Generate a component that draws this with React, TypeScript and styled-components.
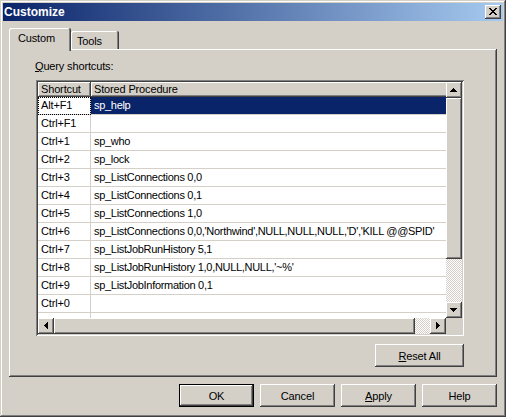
import React from "react";
import styled, { createGlobalStyle } from "styled-components";

const FACE = "#d4d0c8";
const SHADOW = "#808080";
const DARK = "#404040";
const LIGHT = "#ffffff";
const NAVY = "#0a246a";

const raisedEdge = `
  box-shadow: inset -1px -1px ${DARK}, inset 1px 1px ${LIGHT},
    inset -2px -2px ${SHADOW}, inset 2px 2px ${FACE};
`;

const checker = `
  background: repeating-conic-gradient(${FACE} 0% 25%, ${LIGHT} 0% 50%) 0 0 / 2px 2px;
`;

const GlobalStyle = createGlobalStyle`
  html, body {
    margin: 0;
    padding: 0;
    background: ${FACE};
    overflow: hidden;
  }
  body {
    font-family: "Liberation Sans", Arial, sans-serif;
    font-size: 11px;
    letter-spacing: -0.15px;
    color: #000;
  }
`;

const shortcuts: [string, string][] = [
  ["Alt+F1", "sp_help"],
  ["Ctrl+F1", ""],
  ["Ctrl+1", "sp_who"],
  ["Ctrl+2", "sp_lock"],
  ["Ctrl+3", "sp_ListConnections 0,0"],
  ["Ctrl+4", "sp_ListConnections 0,1"],
  ["Ctrl+5", "sp_ListConnections 1,0"],
  ["Ctrl+6", "sp_ListConnections 0,0,'Northwind',NULL,NULL,NULL,'D','KILL @@SPID'"],
  ["Ctrl+7", "sp_ListJobRunHistory 5,1"],
  ["Ctrl+8", "sp_ListJobRunHistory 1,0,NULL,NULL,'~%'"],
  ["Ctrl+9", "sp_ListJobInformation 0,1"],
  ["Ctrl+0", ""],
  ["", ""],
];

// little pixel glyphs (close cross, scroll arrows)
function PixelGlyph({ rows }: { rows: string[] }) {
  return (
    <svg
      width={rows[0].length}
      height={rows.length}
      viewBox={`0 0 ${rows[0].length} ${rows.length}`}
      shapeRendering="crispEdges"
    >
      {rows.map((row, y) =>
        row.split("").map((c, x) =>
          c === "#" ? <rect key={`${x}-${y}`} x={x} y={y} width={1} height={1} fill="#000" /> : null
        )
      )}
    </svg>
  );
}

const CROSS = ["##....##", ".##..##.", "..####..", "...##...", "..####..", ".##..##.", "##....##"];
const UP = ["...#...", "..###..", ".#####.", "#######"];
const DOWN = ["#######", ".#####.", "..###..", "...#..."];
const LEFT = ["...#", "..##", ".###", "####", ".###", "..##", "...#"];
const RIGHT = ["#...", "##..", "###.", "####", "###.", "##..", "#..."];

export default function App() {
  return (
    <>
      <GlobalStyle />
      <Window>
        <TitleBar>
          <TitleText>Customize</TitleText>
          <CloseButton>
            <PixelGlyph rows={CROSS} />
          </CloseButton>
        </TitleBar>

        <Body>
          <TabStrip>
            <Tab $selected $width={62} $padLeft={9}>
              Custom
            </Tab>
            <Tab $width={48} $padLeft={6}>
              Tools
            </Tab>
          </TabStrip>

          <Panel>
            <FieldLabel>
              <u>Q</u>uery shortcuts:
            </FieldLabel>

            <GridFrame>
              <Viewport>
                <HeaderRow>
                  <HeaderCell $width={53}>Shortcut</HeaderCell>
                  <HeaderCell $width={400}>Stored Procedure</HeaderCell>
                </HeaderRow>
                {shortcuts.map(([key, proc], i) => (
                  <Row key={i}>
                    <KeyCell $focused={i === 0}>{key}</KeyCell>
                    <ProcCell $selected={i === 0}>{proc}</ProcCell>
                  </Row>
                ))}
              </Viewport>

              <VScroll>
                <ArrowButton>
                  <PixelGlyph rows={UP} />
                </ArrowButton>
                <Thumb style={{ height: 161 }} />
                <Track />
                <ArrowButton>
                  <PixelGlyph rows={DOWN} />
                </ArrowButton>
              </VScroll>

              <HScroll>
                <ArrowButton>
                  <PixelGlyph rows={LEFT} />
                </ArrowButton>
                <Thumb style={{ width: 361 }} />
                <Track />
                <ArrowButton>
                  <PixelGlyph rows={RIGHT} />
                </ArrowButton>
              </HScroll>

              <Corner />
            </GridFrame>

            <ResetRow>
              <PushButton $width={89}>
                <u>R</u>eset All
              </PushButton>
            </ResetRow>
          </Panel>

          <ButtonBar>
            <PushButton $isDefault>OK</PushButton>
            <PushButton>Cancel</PushButton>
            <PushButton>
              <u>A</u>pply
            </PushButton>
            <PushButton>Help</PushButton>
          </ButtonBar>
        </Body>
      </Window>
    </>
  );
}

const Window = styled.div`
  width: 506px;
  height: 417px;
  box-sizing: border-box;
  padding: 3px;
  display: flex;
  flex-direction: column;

  background: ${FACE};
  box-shadow: inset -1px -1px ${DARK}, inset 1px 1px ${FACE},
    inset -2px -2px ${SHADOW}, inset 2px 2px ${LIGHT};
`;

const TitleBar = styled.div`
  height: 18px;
  flex: none;
  display: flex;
  align-items: center;
  justify-content: space-between;
  padding: 0 2px 0 1px;

  background: linear-gradient(to right, ${NAVY}, #a6caf0);
`;

const TitleText = styled.span`
  color: #fff;
  font-weight: bold;
  font-size: 12px;
  letter-spacing: 0;
  line-height: 18px;
`;

const CloseButton = styled.div`
  width: 16px;
  height: 14px;
  box-sizing: border-box;
  display: flex;
  align-items: center;
  justify-content: center;
  padding: 0 1px 1px 0;

  background: ${FACE};
  ${raisedEdge}
`;

const Body = styled.div`
  flex: 1;
  display: flex;
  flex-direction: column;
  padding: 7px 6px 7px 6px;
`;

const TabStrip = styled.div`
  height: 21px;
  flex: none;
  display: flex;
  align-items: flex-end;
`;

const Tab = styled.div<{ $selected?: boolean; $width: number; $padLeft: number }>`
  position: relative;
  z-index: ${(p) => (p.$selected ? 1 : 0)};
  box-sizing: border-box;
  width: ${(p) => p.$width}px;
  height: ${(p) => (p.$selected ? 23 : 18)}px;
  margin-bottom: ${(p) => (p.$selected ? -2 : 0)}px;
  padding: 4px 0 0 ${(p) => p.$padLeft}px;
  line-height: 13px;

  background: ${FACE};
  border-radius: 2px 2px 0 0;
  box-shadow: inset -1px 0 ${DARK}, inset 1px 1px ${LIGHT}, inset -2px 0 ${SHADOW};
`;

const Panel = styled.div`
  height: 328px;
  flex: none;
  box-sizing: border-box;
  display: flex;
  flex-direction: column;
  padding: 11px 33px 10px 27px;

  background: ${FACE};
  box-shadow: inset -1px -1px ${DARK}, inset 1px 1px ${LIGHT},
    inset -2px -2px ${SHADOW};
`;

const FieldLabel = styled.div`
  line-height: 13px;
  margin: 0 0 7px -1px;
`;

const GridFrame = styled.div`
  width: 428px;
  height: 256px;
  box-sizing: border-box;
  padding: 2px;
  display: grid;
  grid-template-columns: 408px 16px;
  grid-template-rows: 236px 16px;

  background: ${FACE};
  box-shadow: inset 1px 1px ${SHADOW}, inset -1px -1px ${LIGHT},
    inset 2px 2px ${DARK}, inset -2px -2px ${FACE};
`;

const Viewport = styled.div`
  overflow: hidden;
  background: #fff;
`;

const HeaderRow = styled.div`
  display: flex;
  height: 15px;
  width: max-content;
`;

const HeaderCell = styled.div<{ $width: number }>`
  width: ${(p) => p.$width}px;
  box-sizing: border-box;
  padding-left: 3px;
  line-height: 15px;
  white-space: nowrap;

  background: ${FACE};
  box-shadow: inset -1px -1px ${DARK}, inset 1px 1px ${LIGHT}, inset -2px -2px ${SHADOW};
`;

const Row = styled.div`
  display: flex;
  height: 18px;
  width: max-content;
`;

const BaseCell = styled.div`
  box-sizing: border-box;
  height: 18px;
  padding-left: 3px;
  line-height: 17px;
  white-space: nowrap;
  overflow: hidden;
  border-right: 1px solid ${FACE};
  border-bottom: 1px solid ${FACE};
`;

const KeyCell = styled(BaseCell)<{ $focused?: boolean }>`
  width: 53px;
  outline: ${(p) => (p.$focused ? "1px dotted #000" : "none")};
  outline-offset: -1px;
`;

const ProcCell = styled(BaseCell)<{ $selected?: boolean }>`
  width: 400px;
  letter-spacing: -0.3px;
  background: ${(p) => (p.$selected ? NAVY : "#fff")};
  color: ${(p) => (p.$selected ? "#fff" : "#000")};
`;

const VScroll = styled.div`
  display: flex;
  flex-direction: column;
`;

const HScroll = styled.div`
  display: flex;
`;

const ArrowButton = styled.div`
  width: 16px;
  height: 16px;
  flex: none;
  box-sizing: border-box;
  display: flex;
  align-items: center;
  justify-content: center;
  padding: 0 1px 1px 0;

  background: ${FACE};
  ${raisedEdge}
`;

const Thumb = styled.div`
  flex: none;
  background: ${FACE};
  ${raisedEdge}
`;

const Track = styled.div`
  flex: 1;
  ${checker}
`;

const Corner = styled.div`
  background: ${FACE};
`;

const ResetRow = styled.div`
  display: flex;
  justify-content: flex-end;
  margin-top: 8px;
`;

const PushButton = styled.button<{ $isDefault?: boolean; $width?: number }>`
  width: ${(p) => p.$width ?? 75}px;
  height: 23px;
  padding: 0;
  border: none;
  font-family: "Liberation Sans", Arial, sans-serif;
  font-size: 11px;
  letter-spacing: -0.15px;
  color: #000;
  background: ${FACE};
  box-shadow: ${(p) =>
    p.$isDefault
      ? `inset 0 0 0 1px #000, inset -2px -2px ${DARK}, inset 2px 2px ${LIGHT}, inset -3px -3px ${SHADOW}, inset 3px 3px ${FACE}`
      : `inset -1px -1px ${DARK}, inset 1px 1px ${LIGHT}, inset -2px -2px ${SHADOW}, inset 2px 2px ${FACE}`};
`;

const ButtonBar = styled.div`
  display: flex;
  justify-content: flex-end;
  gap: 6px;
  margin-top: 7px;
`;
